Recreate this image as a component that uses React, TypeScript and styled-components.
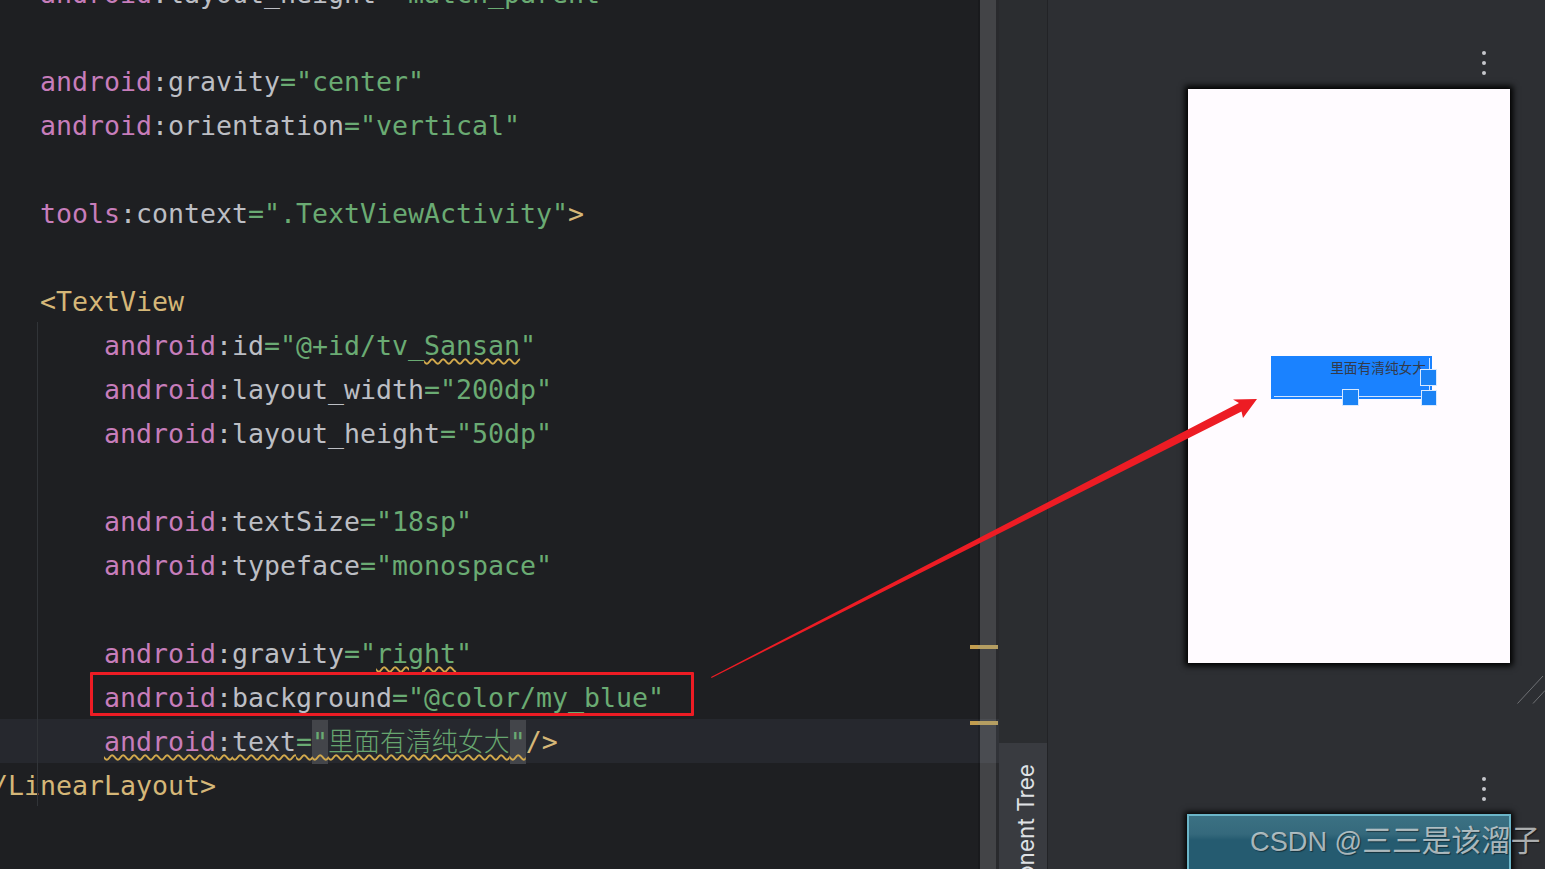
import React from 'react';
import styled, { createGlobalStyle } from 'styled-components';

const GlobalStyle = createGlobalStyle`
  html, body {
    margin: 0;
    padding: 0;
    background: #1e1f22;
  }
`;

const colors = {
  attr: '#c77dbb',
  name: '#bcbec4',
  value: '#6aab73',
  tag: '#d5b778'
};

type TokenKind = keyof typeof colors;

const Page = styled.div`
  display: flex;
  width: 1545px;
  height: 869px;
  overflow: hidden;
  position: relative;
  background: #1e1f22;
`;

const Editor = styled.div`
  position: relative;
  flex: 0 0 999px;
  height: 869px;
  overflow: hidden;
  background: #1e1f22;
`;

const CodeLines = styled.div`
  margin-top: -29px;
  font-family: 'DejaVu Sans Mono', 'Liberation Mono', monospace;
  font-size: 26.58px;
  letter-spacing: 0;
`;

const Row = styled.div<{ $indent: number; $current?: boolean }>`
  height: 44px;
  box-sizing: border-box;
  padding-top: 1px;
  line-height: 44px;
  white-space: pre;
  padding-left: ${(p) => Math.max(p.$indent, 0)}px;
  margin-left: ${(p) => Math.min(p.$indent, 0)}px;
  background: ${(p) => (p.$current ? '#26282e' : 'transparent')};
`;

const Token = styled.span<{ $kind: TokenKind }>`
  color: ${(p) => colors[p.$kind]};
`;

const Squiggle = styled.span`
  text-decoration: underline wavy #d2a94c;
  text-decoration-thickness: 1.5px;
  text-underline-offset: 3px;
`;

const QuoteMark = styled.span`
  color: ${colors.value};
  background: #43454a;
  padding-block: 6.5px;
`;

const Chinese = styled.span`
  font-family: 'Noto Sans CJK SC', sans-serif;
  font-size: 25.95px;
  line-height: 1;
  font-weight: 300;
  color: #66a56f;
`;

const IndentGuide = styled.div`
  position: absolute;
  left: 37px;
  top: 322px;
  width: 1px;
  height: 484px;
  background: #313438;
`;

const RedBox = styled.div`
  position: absolute;
  left: 90px;
  top: 672px;
  width: 604px;
  height: 44px;
  box-sizing: border-box;
  border: 3px solid #ed1c24;
  border-radius: 1px;
`;

const ScrollTrack = styled.div`
  position: absolute;
  left: 978px;
  top: 0;
  width: 21px;
  height: 869px;
  box-sizing: border-box;
  display: flex;
  border-left: 2px solid rgba(0, 0, 0, 0.14);
  border-right: 3px solid rgba(255, 255, 255, 0.05);
`;

const ScrollThumb = styled.div`
  width: 16px;
  height: 100%;
  background: rgba(255, 255, 255, 0.169);
`;

const StripeMark = styled.div<{ $top: number }>`
  position: absolute;
  left: 970px;
  top: ${(p) => p.$top}px;
  width: 28px;
  height: 4px;
  background: linear-gradient(90deg, #c29d4f 0 8px, #b59e62 8px);
`;

const ToolStrip = styled.div`
  flex: 0 0 49px;
  box-sizing: border-box;
  height: 869px;
  display: flex;
  flex-direction: column;
  justify-content: flex-end;
  background: #2b2d30;
  border-right: 1px solid #222326;
`;

const ToolTab = styled.div`
  height: 126px;
  overflow: hidden;
  background: #393b40;
  display: flex;
  justify-content: center;
  align-items: flex-start;
`;

const ToolLabel = styled.span`
  writing-mode: vertical-rl;
  transform: rotate(180deg);
  margin-top: 21px;
  margin-left: 6px;
  font-family: Inter, 'Liberation Sans', sans-serif;
  font-size: 22.6px;
  line-height: 24px;
  white-space: nowrap;
  color: #dfe1e5;
`;

const DesignArea = styled.div`
  position: relative;
  flex: 1;
  height: 869px;
  overflow: hidden;
  background: #2d2f33;
  padding-top: 51px;
  box-sizing: border-box;
`;

const DotMenu = styled.div<{ $gap: number }>`
  display: flex;
  flex-direction: column;
  align-items: flex-end;
  gap: 6px;
  margin-top: ${(p) => p.$gap}px;
  margin-right: 59px;
`;

const Dot = styled.span`
  width: 4px;
  height: 4px;
  border-radius: 50%;
  background: #c4c6cb;
`;

const PhoneScreen = styled.div`
  width: 322px;
  height: 574px;
  box-sizing: border-box;
  margin: 14px 0 0 140px;
  padding: 3px 0 0 5px;
  display: flex;
  align-items: center;
  justify-content: center;
  background: #fffbff;
  box-shadow: 0 0 6px 3px #000;
`;

const BlueView = styled.div`
  position: relative;
  width: 161px;
  height: 43px;
  box-sizing: border-box;
  padding-right: 6px;
  background: #1a82ff;
  text-align: right;
  white-space: nowrap;
  font-family: 'Noto Sans CJK SC', sans-serif;
  font-size: 13.7px;
  line-height: 23px;
  color: #333a4a;

  &::after {
    content: '';
    position: absolute;
    left: 3px;
    right: 2px;
    bottom: 2px;
    top: 2px;
    border-right: 1px solid #cfe4ff;
    border-bottom: 1px solid #cfe4ff;
  }
`;

const Handle = styled.span<{ $left: number; $top: number; $size: number }>`
  position: absolute;
  z-index: 1;
  left: ${(p) => p.$left}px;
  top: ${(p) => p.$top}px;
  width: ${(p) => p.$size}px;
  height: ${(p) => p.$size}px;
  box-sizing: border-box;
  background: #1a82f5;
  border: 1.5px solid #d8e9ff;
`;

const BlueprintScreen = styled.div`
  width: 324px;
  height: 60px;
  box-sizing: border-box;
  margin: 13px 0 0 139px;
  background: linear-gradient(180deg, #3b7183 0, #35697c 18px, #255b70 24px);
  border: 2px solid #6bb5c8;
  border-bottom: 0;
  box-shadow: 0 0 6px 2px #000;
`;

const ResizeMark = styled.svg`
  position: absolute;
  right: 0;
  top: 676px;
`;

const ArrowOverlay = styled.svg`
  position: absolute;
  left: 0;
  top: 0;
  pointer-events: none;
`;

const Watermark = styled.div`
  position: absolute;
  left: 1250px;
  top: 823px;
  font-family: 'Liberation Sans', 'Noto Sans CJK SC', sans-serif;
  font-size: 27.2px;
  line-height: 38px;
  white-space: nowrap;
  color: rgba(225, 228, 228, 0.72);
  text-shadow: 1px 1px 1px rgba(0, 0, 0, 0.45);
`;

const WatermarkName = styled.span`
  font-family: 'Noto Sans CJK SC', sans-serif;
  font-size: 29.7px;
  line-height: 1;
`;

const ATTR_INDENT = 104;
const ROOT_INDENT = 40;

const Attr = ({ ns = 'android', name, value }: { ns?: string; name: string; value: React.ReactNode }) => (
  <>
    <Token $kind="attr">{ns}</Token>
    <Token $kind="name">:{name}</Token>
    <Token $kind="value">={value}</Token>
  </>
);

const App = () => {
  return (
    <Page>
      <GlobalStyle />
      <Editor>
        <CodeLines>
          <Row $indent={ROOT_INDENT}>
            <Attr name="layout_height" value='"match_parent"' />
          </Row>
          <Row $indent={0} />
          <Row $indent={ROOT_INDENT}>
            <Attr name="gravity" value='"center"' />
          </Row>
          <Row $indent={ROOT_INDENT}>
            <Attr name="orientation" value='"vertical"' />
          </Row>
          <Row $indent={0} />
          <Row $indent={ROOT_INDENT}>
            <Attr ns="tools" name="context" value='".TextViewActivity"' />
            <Token $kind="tag">&gt;</Token>
          </Row>
          <Row $indent={0} />
          <Row $indent={ROOT_INDENT}>
            <Token $kind="tag">&lt;TextView</Token>
          </Row>
          <Row $indent={ATTR_INDENT}>
            <Attr
              name="id"
              value={
                <>
                  "@+id/tv_<Squiggle>Sansan</Squiggle>"
                </>
              }
            />
          </Row>
          <Row $indent={ATTR_INDENT}>
            <Attr name="layout_width" value='"200dp"' />
          </Row>
          <Row $indent={ATTR_INDENT}>
            <Attr name="layout_height" value='"50dp"' />
          </Row>
          <Row $indent={0} />
          <Row $indent={ATTR_INDENT}>
            <Attr name="textSize" value='"18sp"' />
          </Row>
          <Row $indent={ATTR_INDENT}>
            <Attr name="typeface" value='"monospace"' />
          </Row>
          <Row $indent={0} />
          <Row $indent={ATTR_INDENT}>
            <Attr
              name="gravity"
              value={
                <>
                  "<Squiggle>right</Squiggle>"
                </>
              }
            />
          </Row>
          <Row $indent={ATTR_INDENT}>
            <Attr name="background" value='"@color/my_blue"' />
          </Row>
          <Row $indent={ATTR_INDENT} $current>
            <Squiggle>
              <Attr
                name="text"
                value={
                  <>
                    <QuoteMark>"</QuoteMark>
                    <Chinese>里面有清纯女大</Chinese>
                    <QuoteMark>"</QuoteMark>
                  </>
                }
              />
            </Squiggle>
            <Token $kind="tag">/&gt;</Token>
          </Row>
          <Row $indent={-8}>
            <Token $kind="tag">/LinearLayout&gt;</Token>
          </Row>
        </CodeLines>
        <IndentGuide />
        <RedBox />
        <ScrollTrack>
          <ScrollThumb />
        </ScrollTrack>
        <StripeMark $top={645} />
        <StripeMark $top={721} />
      </Editor>
      <ToolStrip>
        <ToolTab>
          <ToolLabel>Component Tree</ToolLabel>
        </ToolTab>
      </ToolStrip>
      <DesignArea>
        <DotMenu $gap={0}>
          <Dot />
          <Dot />
          <Dot />
        </DotMenu>
        <PhoneScreen>
          <BlueView>
            里面有清纯女大
            <Handle $left={71} $top={33} $size={17} />
            <Handle $left={149} $top={13} $size={17} />
            <Handle $left={150} $top={34} $size={16} />
          </BlueView>
        </PhoneScreen>
        <DotMenu $gap={114}>
          <Dot />
          <Dot />
          <Dot />
        </DotMenu>
        <BlueprintScreen />
        <ResizeMark width="28" height="28" viewBox="0 0 28 28">
          <path d="M0.5 27.5 L26 0 M16 27.5 L28 14.5" stroke="#6f7175" strokeWidth="1" fill="none" />
        </ResizeMark>
      </DesignArea>
      <ArrowOverlay width="1545" height="869" viewBox="0 0 1545 869">
        <polygon
          points="711,677 1239,403 1233,399.5 1257,399 1243,418 1241.5,411.5 711.5,678"
          fill="#ed1c24"
        />
      </ArrowOverlay>
      <Watermark>
        CSDN @<WatermarkName>三三是该溜子</WatermarkName>
      </Watermark>
    </Page>
  );
};

export default App;
